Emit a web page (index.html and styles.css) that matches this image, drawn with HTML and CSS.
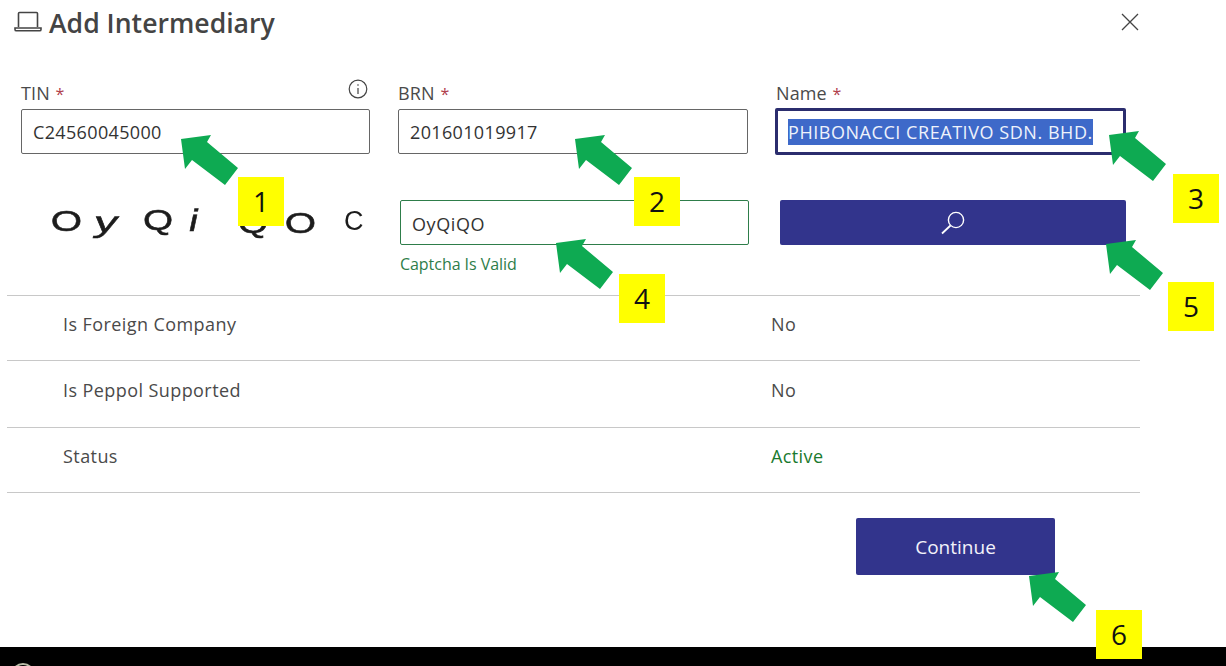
FILE: index.html
```html
<!DOCTYPE html>
<html lang="en">
<head>
<meta charset="utf-8">
<title>Add Intermediary</title>
<link rel="stylesheet" href="styles.css">
</head>
<body>
<main class="dialog">
  <header class="head">
    <svg class="laptop" viewBox="0 0 28 22" width="28" height="22" fill="none" stroke="#444" stroke-width="1.6"><path d="M4.5 16V2.5a1 1 0 0 1 1-1h17a1 1 0 0 1 1 1V16"/><path d="M1 17h26v1.4a1.4 1.4 0 0 1-1.4 1.4H2.4A1.4 1.4 0 0 1 1 18.4z"/></svg>
    <h1 class="title">Add Intermediary</h1>
    <svg class="close" viewBox="0 0 18 18" width="18" height="18" fill="none" stroke="#444" stroke-width="1.3"><path d="M1 1l16 16M17 1L1 17"/></svg>
  </header>

  <section class="fields">
    <div class="field">
      <div class="label-row">
        <label class="label">TIN <span class="req">*</span></label>
        <svg class="info" viewBox="0 0 20 20" width="20" height="20" fill="none" stroke="#444" stroke-width="1.2"><circle cx="10" cy="10" r="8.8"/><path d="M10 9v6M10 5.2v1.6"/></svg>
      </div>
      <div class="input">C24560045000</div>
    </div>
    <div class="field">
      <div class="label-row"><label class="label">BRN <span class="req">*</span></label></div>
      <div class="input">201601019917</div>
    </div>
    <div class="field">
      <div class="label-row"><label class="label">Name <span class="req">*</span></label></div>
      <div class="input input-focus"><span class="selected">PHIBONACCI CREATIVO SDN. BHD.</span></div>
    </div>
  </section>

  <section class="captcha-row">
    <div class="captcha">
      <span class="cl cl-o1">O</span><span class="cl cl-y">y</span><span class="cl cl-q1">Q</span><span class="cl cl-i">i</span><span class="cl cl-q2">Q</span><span class="cl cl-o2">O</span><span class="cl-c">C</span>
    </div>
    <div class="captcha-field">
      <div class="input input-valid">OyQiQO</div>
      <div class="hint">Captcha Is Valid</div>
    </div>
    <button class="search" type="button" aria-label="Search">
      <svg viewBox="0 0 26 24" width="26" height="24" fill="none" stroke="#fff" stroke-width="1.4"><circle cx="16" cy="9" r="7.6"/><path d="M10.5 14.5L2 22.5" stroke-width="1.8"/></svg>
    </button>
  </section>

  <section class="rows">
    <div class="row row-a"><span class="key">Is Foreign Company</span><span class="val">No</span></div>
    <div class="row row-b"><span class="key">Is Peppol Supported</span><span class="val">No</span></div>
    <div class="row row-c"><span class="key">Status</span><span class="val val-ok">Active</span></div>
  </section>

  <footer class="actions"><button class="continue" type="button">Continue</button></footer>
</main>
<div class="taskbar"><span class="taskbar-dot"></span></div>

<svg class="arrows" viewBox="0 0 1226 666" width="1226" height="666" fill="#0eaa52">
  <defs><polygon id="arrow" points="0,0 30,-4 26,3 57,29 44,46 11,21 4,30"/></defs>
  <use href="#arrow" x="181" y="139"/>
  <use href="#arrow" x="575" y="139"/>
  <use href="#arrow" x="1109" y="135"/>
  <use href="#arrow" x="556" y="243"/>
  <use href="#arrow" x="1106" y="244"/>
  <use href="#arrow" x="1029" y="576"/>
</svg>
<div class="badge b1">1</div>
<div class="badge b2">2</div>
<div class="badge b3">3</div>
<div class="badge b4">4</div>
<div class="badge b5">5</div>
<div class="badge b6">6</div>
</body>
</html>
```
FILE: styles.css
```css
* { box-sizing: border-box; }
html, body { margin: 0; padding: 0; }
body {
  width: 1226px;
  height: 666px;
  overflow: hidden;
  position: relative;
  background: #fff;
  color: #3a3a3a;
  font-family: "Open Sans", "Noto Sans", sans-serif;
}
.dialog { height: 647px; padding-left: 7px; width: 1140px; display: flex; flex-direction: column; }

.head { height: 47px; display: flex; align-items: center; padding-left: 7px; }
.laptop { flex: none; margin-right: 7px; margin-top: -4px; }
.title { margin: 0; flex: 1; font-size: 26.6px; line-height: 47px; font-weight: 600; color: #444; }
.close { flex: none; margin-right: 1px; margin-top: -3px; }

.fields { display: grid; grid-template-columns: 349px 350px 350px; column-gap: 28px; padding-left: 14px; margin-top: 33px; }
.label-row { height: 29px; display: flex; justify-content: space-between; align-items: flex-start; }
.label { font-size: 18px; line-height: 26px; color: #4a4a4a; letter-spacing: .1px; }
.req { color: #b0404c; font-size: 16px; margin-left: 1px; }
.info { margin-right: 2px; margin-top: -1px; }
.input {
  height: 45px;
  border: 1px solid #666;
  border-radius: 2px;
  padding: 0 11px;
  font-size: 18px;
  line-height: 45px;
  letter-spacing: .35px;
  color: #333;
  white-space: nowrap;
}
.input-focus { height: 47px; margin: -1px 0 0 -1px; border: 3px solid #2b2d6e; border-radius: 2px; padding: 0 10px; line-height: 43px; letter-spacing: .55px; }
.selected { display: inline-block; height: 26px; line-height: 26px; background: #3e69c9; color: #eef2fb; }
.input-valid { height: 45px; border-color: #2e7d4a; line-height: 46px; letter-spacing: .6px; }

.captcha-row { display: flex; align-items: flex-start; margin-top: 45px; height: 95px; }
.captcha { width: 393px; height: 45px; display: flex; align-items: center; padding-left: 44px; filter: blur(.5px); font-family: "Liberation Sans", sans-serif; color: #1c1c1c; }
.cl { display: block; font-size: 31px; line-height: 45px; text-align: center; font-weight: 400; -webkit-text-stroke: .5px #1c1c1c; transform-origin: center; }
.cl-o1 { width: 31px; transform: translateY(-1px) scaleX(1.3) scaleY(.95); }
.cl-y { width: 25px; margin-left: 12px; transform: translateY(0) skewX(-12deg) scaleX(1.5) scaleY(.95); }
.cl-q1 { width: 30px; margin-left: 24px; transform: translateY(-2px) scaleX(1.25) scaleY(.95); }
.cl-i { width: 12px; margin-left: 15px; transform: translateY(-2px) skewX(-12deg) scaleX(1.3); }
.cl-q2 { width: 30px; margin-left: 38px; transform: translateY(1px) scaleX(1.25) scaleY(.95); }
.cl-o2 { width: 31px; margin-left: 17px; transform: translateY(1px) scaleX(1.3) scaleY(.95); }
.cl-c { font-size: 27px; line-height: 45px; margin-left: 28px; margin-top: -3px; font-weight: 400; }
.captcha-field { width: 349px; }
.hint { font-size: 16px; line-height: 22px; margin-top: 8px; color: #2e7d4a; letter-spacing: -.05px; }
.search { width: 346px; height: 45px; margin-left: 31px; border: 0; border-radius: 2px; background: #32348c; display: flex; align-items: center; justify-content: center; padding: 0; }

.rows { border-top: 1px solid #c8c8c8; }
.row { display: flex; align-items: center; border-bottom: 1px solid #c8c8c8; padding-bottom: 8px; font-size: 18px; color: #4a4a4a; }
.row-a { height: 65px; }
.row-b { height: 67px; }
.row-c { height: 65px; }
.key { width: 764px; padding-left: 56px; letter-spacing: .42px; }
.val { color: #4a4a4a; letter-spacing: .4px; }
.val-ok { color: #1a7a2e; }

.actions { display: flex; justify-content: flex-end; padding-right: 85px; margin-top: 25px; }
.continue { width: 199px; height: 57px; border: 0; border-radius: 2px; background: #32348c; color: #f2f2fa; font-family: inherit; font-size: 19px; padding: 0; }

.taskbar { height: 19px; background: #000; position: relative; overflow: hidden; }
.taskbar-dot { position: absolute; left: 11px; top: 16px; width: 24px; height: 24px; border-radius: 50%; border: 2px solid #b9bda8; }

.arrows { position: absolute; left: 0; top: 0; pointer-events: none; }
.badge { position: absolute; width: 46px; height: 49px; background: #ffff00; color: #111; font-size: 28px; line-height: 49px; text-align: center; }
.b1 { left: 238px; top: 177px; }
.b2 { left: 634px; top: 177px; }
.b3 { left: 1173px; top: 174px; }
.b4 { left: 619px; top: 274px; }
.b5 { left: 1168px; top: 282px; }
.b6 { left: 1096px; top: 610px; }
```
